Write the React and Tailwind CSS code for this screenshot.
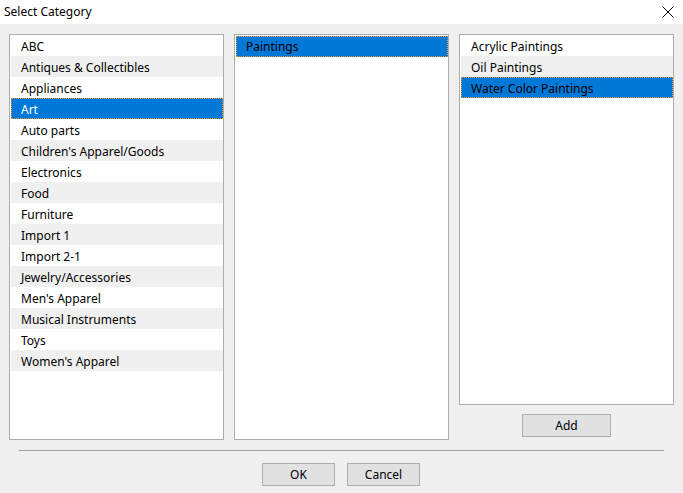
import React from "react";

const left = [
  "ABC",
  "Antiques & Collectibles",
  "Appliances",
  "Art",
  "Auto parts",
  "Children's Apparel/Goods",
  "Electronics",
  "Food",
  "Furniture",
  "Import 1",
  "Import 2-1",
  "Jewelry/Accessories",
  "Men's Apparel",
  "Musical Instruments",
  "Toys",
  "Women's Apparel",
];
const right = ["Acrylic Paintings", "Oil Paintings", "Water Color Paintings"];

function Row({ text, i, selected, focused, selPad = "pt-[2px]" }) {
  if (selected) {
    return (
      <div
        className={
          "h-[21px] flex items-center pl-[9px] bg-[#0078d7] border border-dotted border-[#f0902a] " +
          selPad +
          " " +
          (focused ? "text-white" : "text-black")
        }
      >
        {text}
      </div>
    );
  }
  return (
    <div
      className={
        "h-[21px] flex items-center pt-[2px] pl-[10px] text-black " +
        (i % 2 === 1 ? "bg-[#f0f0f0]" : "bg-white")
      }
    >
      {text}
    </div>
  );
}

function Btn({ children, w }) {
  return (
    <div
      className={
        "h-[23px] flex items-center justify-center bg-[#e1e1e1] border border-[#adadad] text-black " +
        w
      }
    >
      {children}
    </div>
  );
}

export default function App() {
  return (
    <div
      className="w-[683px] h-[493px] bg-[#f0f0f0] flex flex-col text-[12px] leading-none"
      style={{ fontFamily: '"Noto Sans", "Liberation Sans", sans-serif' }}
    >
      <div className="h-[24px] bg-white flex items-center justify-between pl-[4px] pr-[9px] shrink-0">
        <span className="text-black">Select Category</span>
        <svg width="12" height="12" viewBox="0 0 12 12" className="mt-[-1px]">
          <path d="M0.5 0.5 L11.5 11.5 M11.5 0.5 L0.5 11.5" stroke="#000" strokeWidth="1" fill="none" />
        </svg>
      </div>
      <div className="flex gap-[10px] px-[9px] pt-[10px]">
        <div className="w-[215px] h-[406px] bg-white border border-[#acacac] pl-[1px]">
          {left.map((t, i) => (
            <Row key={t} text={t} i={i} selected={t === "Art"} focused />
          ))}
        </div>
        <div className="w-[215px] h-[406px] bg-white border border-[#acacac] pl-[1px] pt-[1px]">
          <Row text="Paintings" i={0} selected focused={false} selPad="pt-[1px]" />
        </div>
        <div className="w-[215px] flex flex-col items-center">
          <div className="w-[215px] h-[371px] bg-white border border-[#acacac] pl-[1px]">
            {right.map((t, i) => (
              <Row key={t} text={t} i={i} selected={i === 2} focused={false} />
            ))}
          </div>
          <div className="mt-[9px]">
            <Btn w="w-[89px]">Add</Btn>
          </div>
        </div>
      </div>
      <div className="mx-[19px] mt-[10px] h-[1px] bg-[#a0a0a0]" />
      <div className="flex justify-center gap-[12px] mt-[12px] pr-[1px]">
        <Btn w="w-[73px]">OK</Btn>
        <Btn w="w-[73px]">Cancel</Btn>
      </div>
    </div>
  );
}
